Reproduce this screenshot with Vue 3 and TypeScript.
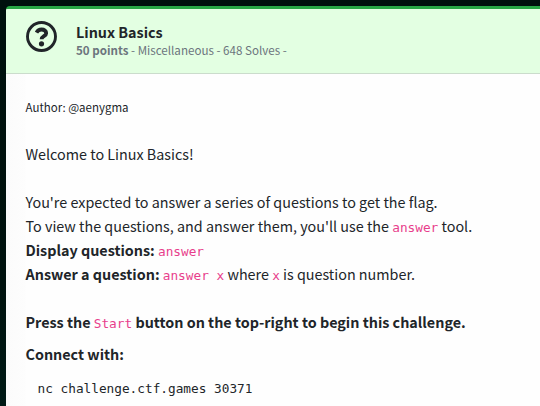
<script setup lang="ts">
const challenge = {
  title: 'Linux Basics',
  points: 50,
  category: 'Miscellaneous',
  solves: 648,
  author: '@aenygma',
  command: 'nc challenge.ctf.games 30371',
}
</script>

<template>
  <main class="page">
    <article class="card">
      <header class="card-header">
        <svg class="icon" viewBox="0 0 31 31" aria-hidden="true">
          <circle cx="15.5" cy="15.5" r="14" fill="none" stroke="currentColor" stroke-width="2.9" />
          <path d="M10.5 11.6C11.8 9.3 13.3 8.5 15.5 8.5C18.3 8.5 20.2 10 20.2 12.2C20.2 15.3 15.6 15.1 15.6 18.3" fill="none" stroke="currentColor" stroke-width="3.8" />
          <circle cx="15.5" cy="22.8" r="2.6" fill="currentColor" />
        </svg>
        <div class="heading">
          <h1>{{ challenge.title }}</h1>
          <p class="meta"><b>{{ challenge.points }} points</b> - {{ challenge.category }} - {{ challenge.solves }} Solves -</p>
        </div>
      </header>
      <section class="body">
        <p class="author">Author: {{ challenge.author }}</p>
        <p class="line gap">Welcome to Linux Basics!</p>
        <p class="line gap">You're expected to answer a series of questions to get the flag.</p>
        <p class="line">To view the questions, and answer them, you'll use the <code>answer</code> tool.</p>
        <p class="line"><b>Display questions:</b> <code>answer</code></p>
        <p class="line"><b>Answer a question:</b> <code>answer x</code> where <code>x</code> is question number.</p>
        <p class="line gap"><b>Press the <code>Start</code> button on the top-right to begin this challenge.</b></p>
        <p class="line connect"><b>Connect with:</b></p>
        <pre>{{ challenge.command }}</pre>
      </section>
    </article>
  </main>
</template>

<style>
body {
  background: #00100e;
}
</style>

<style scoped>
.page {
  box-sizing: border-box;
  height: 406px;
  padding: 6px 0 0 6px;
  overflow: hidden;
  background: linear-gradient(180deg, #00100d, #00120e 70%, #001a16);
  font-family: "Noto Sans CJK JP", "Noto Sans", sans-serif;
  font-size: 14.35px;
  color: #212529;
}
.card {
  height: 420px;
  border-top: 3px solid #28a745;
  border-top-left-radius: 4px;
  background: linear-gradient(90deg, #fbfbfb, #fdfdfd 19px, #fefefe 20px);
  overflow: hidden;
}
.card-header {
  box-sizing: border-box;
  display: flex;
  height: 65px;
  padding: 12px 20px 0;
  gap: 19px;
  border-bottom: 1px solid #cbdccc;
  background: #e3ffe2;
}
.icon {
  width: 31px;
  height: 31px;
}
.heading {
  padding-top: 1px;
}
h1, p, pre {
  margin: 0;
  white-space: pre;
}
h1 {
  font-size: 14.35px;
  line-height: 20px;
  font-weight: 700;
}
.meta {
  font-size: 11.6px;
  line-height: 17px;
  color: #6c757d;
}
b {
  font-weight: 700;
}
.body {
  padding: 23px 20px 0 19.5px;
}
.author {
  margin-bottom: 25px;
  font-size: 11.5px;
  line-height: 20px;
}
.line {
  height: 24px;
  line-height: 24px;
}
.gap {
  margin-top: 24px;
}
.connect {
  margin-top: 8px;
}
code, pre {
  font-family: "DejaVu Sans Mono", monospace;
  font-size: 12.75px;
}
code {
  color: #e83e8c;
  font-weight: 400;
}
pre {
  margin-top: 11px;
  padding-left: 12px;
  line-height: 24px;
}
</style>
